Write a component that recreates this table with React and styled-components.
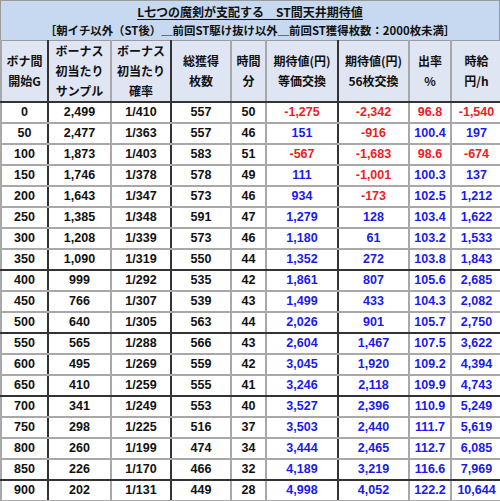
import React from "react";
import styled, { createGlobalStyle } from "styled-components";

const Global = createGlobalStyle`
  html, body { margin: 0; padding: 0; background: #ffffff; }
  body { font-family: "Liberation Sans", "Noto Sans CJK JP", sans-serif; }
`;

const Wrap = styled.div`
  width: 500px;
  height: 501px;
  overflow: hidden;
  background: #ffffff;
`;

const TitleBand = styled.div`
  height: 40px;
  box-sizing: border-box;
  background: #c6d9f0;
  border: 1px solid #9a9a9a;
  border-bottom: none;
  display: flex;
  flex-direction: column;
  align-items: center;
  justify-content: center;
  gap: 2px;
  padding-top: 1px;
  font-family: "Noto Sans CJK JP", sans-serif;
  font-weight: 700;
  color: #111;
`;

const TitleLine = styled.div`
  font-size: ${(p) => (p.$small ? "11.4px" : "12px")};
  line-height: 16px;
  text-decoration: ${(p) => (p.$underline ? "underline" : "none")};
  text-underline-offset: 2px;
  white-space: nowrap;
`;

const Table = styled.table`
  width: 500px;
  table-layout: fixed;
  border-collapse: collapse;
`;

const Th = styled.th`
  height: 60px;
  padding: 0;
  background: #dfe5f2;
  border-left: ${(p) => (p.$dark ? "2px solid #333" : "2px solid #a8a8a8")};
  border-top: 1px solid #9a9a9a;
  border-bottom: 2px solid #333;
  font-family: "Noto Sans CJK JP", sans-serif;
  font-weight: 700;
  font-size: 12px;
  color: #111;
  text-align: center;
  vertical-align: middle;
  white-space: nowrap;
`;

const HeadLine = styled.div`
  display: block;
  line-height: 20px;
  height: 20px;
`;

const Td = styled.td`
  height: 19px;
  padding: 0;
  background: #ffffff;
  border-left: ${(p) => (p.$dark ? "2px solid #333" : "2px solid #a8a8a8")};
  border-bottom: ${(p) => (p.$thick ? "2px solid #333" : "2px solid #a8a8a8")};
  font-family: "Liberation Sans", "Noto Sans CJK JP", sans-serif;
  font-weight: 700;
  font-size: 12.5px;
  line-height: 19px;
  text-align: center;
  white-space: nowrap;
  color: ${(p) => (p.$tone === "red" ? "#ee1c24" : p.$tone === "blue" ? "#1a1aee" : "#111")};
`;

const widths = [47, 63, 60, 60, 35, 72, 71, 42, 50];
const darkLeft = [false, true, false, true, false, false, true, false, false];

const headers = [
  ["ボナ間", "開始G"],
  ["ボーナス", "初当たり", "サンプル"],
  ["ボーナス", "初当たり", "確率"],
  ["総獲得", "枚数"],
  ["時間", "分"],
  ["期待値(円)", "等価交換"],
  ["期待値(円)", "56枚交換"],
  ["出率", "%"],
  ["時給", "円/h"],
];

const rows = [
  [0, 2499, "1/410", 557, 50, -1275, -2342, 96.8, -1540],
  [50, 2477, "1/363", 557, 46, 151, -916, 100.4, 197],
  [100, 1873, "1/403", 583, 51, -567, -1683, 98.6, -674],
  [150, 1746, "1/378", 578, 49, 111, -1001, 100.3, 137],
  [200, 1643, "1/347", 573, 46, 934, -173, 102.5, 1212],
  [250, 1385, "1/348", 591, 47, 1279, 128, 103.4, 1622],
  [300, 1208, "1/339", 573, 46, 1180, 61, 103.2, 1533],
  [350, 1090, "1/319", 550, 44, 1352, 272, 103.8, 1843],
  [400, 999, "1/292", 535, 42, 1861, 807, 105.6, 2685],
  [450, 766, "1/307", 539, 43, 1499, 433, 104.3, 2082],
  [500, 640, "1/305", 563, 44, 2026, 901, 105.7, 2750],
  [550, 565, "1/288", 566, 43, 2604, 1467, 107.5, 3622],
  [600, 495, "1/269", 559, 42, 3045, 1920, 109.2, 4394],
  [650, 410, "1/259", 555, 41, 3246, 2118, 109.9, 4743],
  [700, 341, "1/249", 553, 40, 3527, 2396, 110.9, 5249],
  [750, 298, "1/225", 516, 37, 3503, 2440, 111.7, 5619],
  [800, 260, "1/199", 474, 34, 3444, 2465, 112.7, 6085],
  [850, 226, "1/170", 466, 32, 4189, 3219, 116.6, 7969],
  [900, 202, "1/131", 449, 28, 4998, 4052, 122.2, 10644],
];

const thickAfter = new Set([7, 10, 13, 17]);

const fmt = (v, i) => {
  if (typeof v === "string") return v;
  if (i === 7) return v.toFixed(1);
  return v.toLocaleString("en-US");
};

const toneOf = (v, i) => {
  if (i < 5) return "black";
  if (i === 7) return v < 100 ? "red" : "blue";
  return v < 0 ? "red" : "blue";
};

export default function App() {
  return (
    <Wrap>
      <Global />
      <TitleBand>
        <TitleLine $underline>L七つの魔剣が支配する　ST間天井期待値</TitleLine>
        <TitleLine $small>［朝イチ以外（ST後）＿前回ST駆け抜け以外＿前回ST獲得枚数：2000枚未満］</TitleLine>
      </TitleBand>
      <Table>
        <colgroup>
          {widths.map((w, i) => (
            <col key={i} style={{ width: w }} />
          ))}
        </colgroup>
        <thead>
          <tr>
            {headers.map((h, i) => (
              <Th key={i} $dark={darkLeft[i]}>
                {h.map((line, j) => (
                  <HeadLine key={j}>{line}</HeadLine>
                ))}
              </Th>
            ))}
          </tr>
        </thead>
        <tbody>
          {rows.map((r, ri) => (
            <tr key={ri}>
              {r.map((v, i) => (
                <Td key={i} $dark={darkLeft[i]} $thick={thickAfter.has(ri)} $tone={toneOf(v, i)}>
                  {fmt(v, i)}
                </Td>
              ))}
            </tr>
          ))}
        </tbody>
      </Table>
    </Wrap>
  );
}
